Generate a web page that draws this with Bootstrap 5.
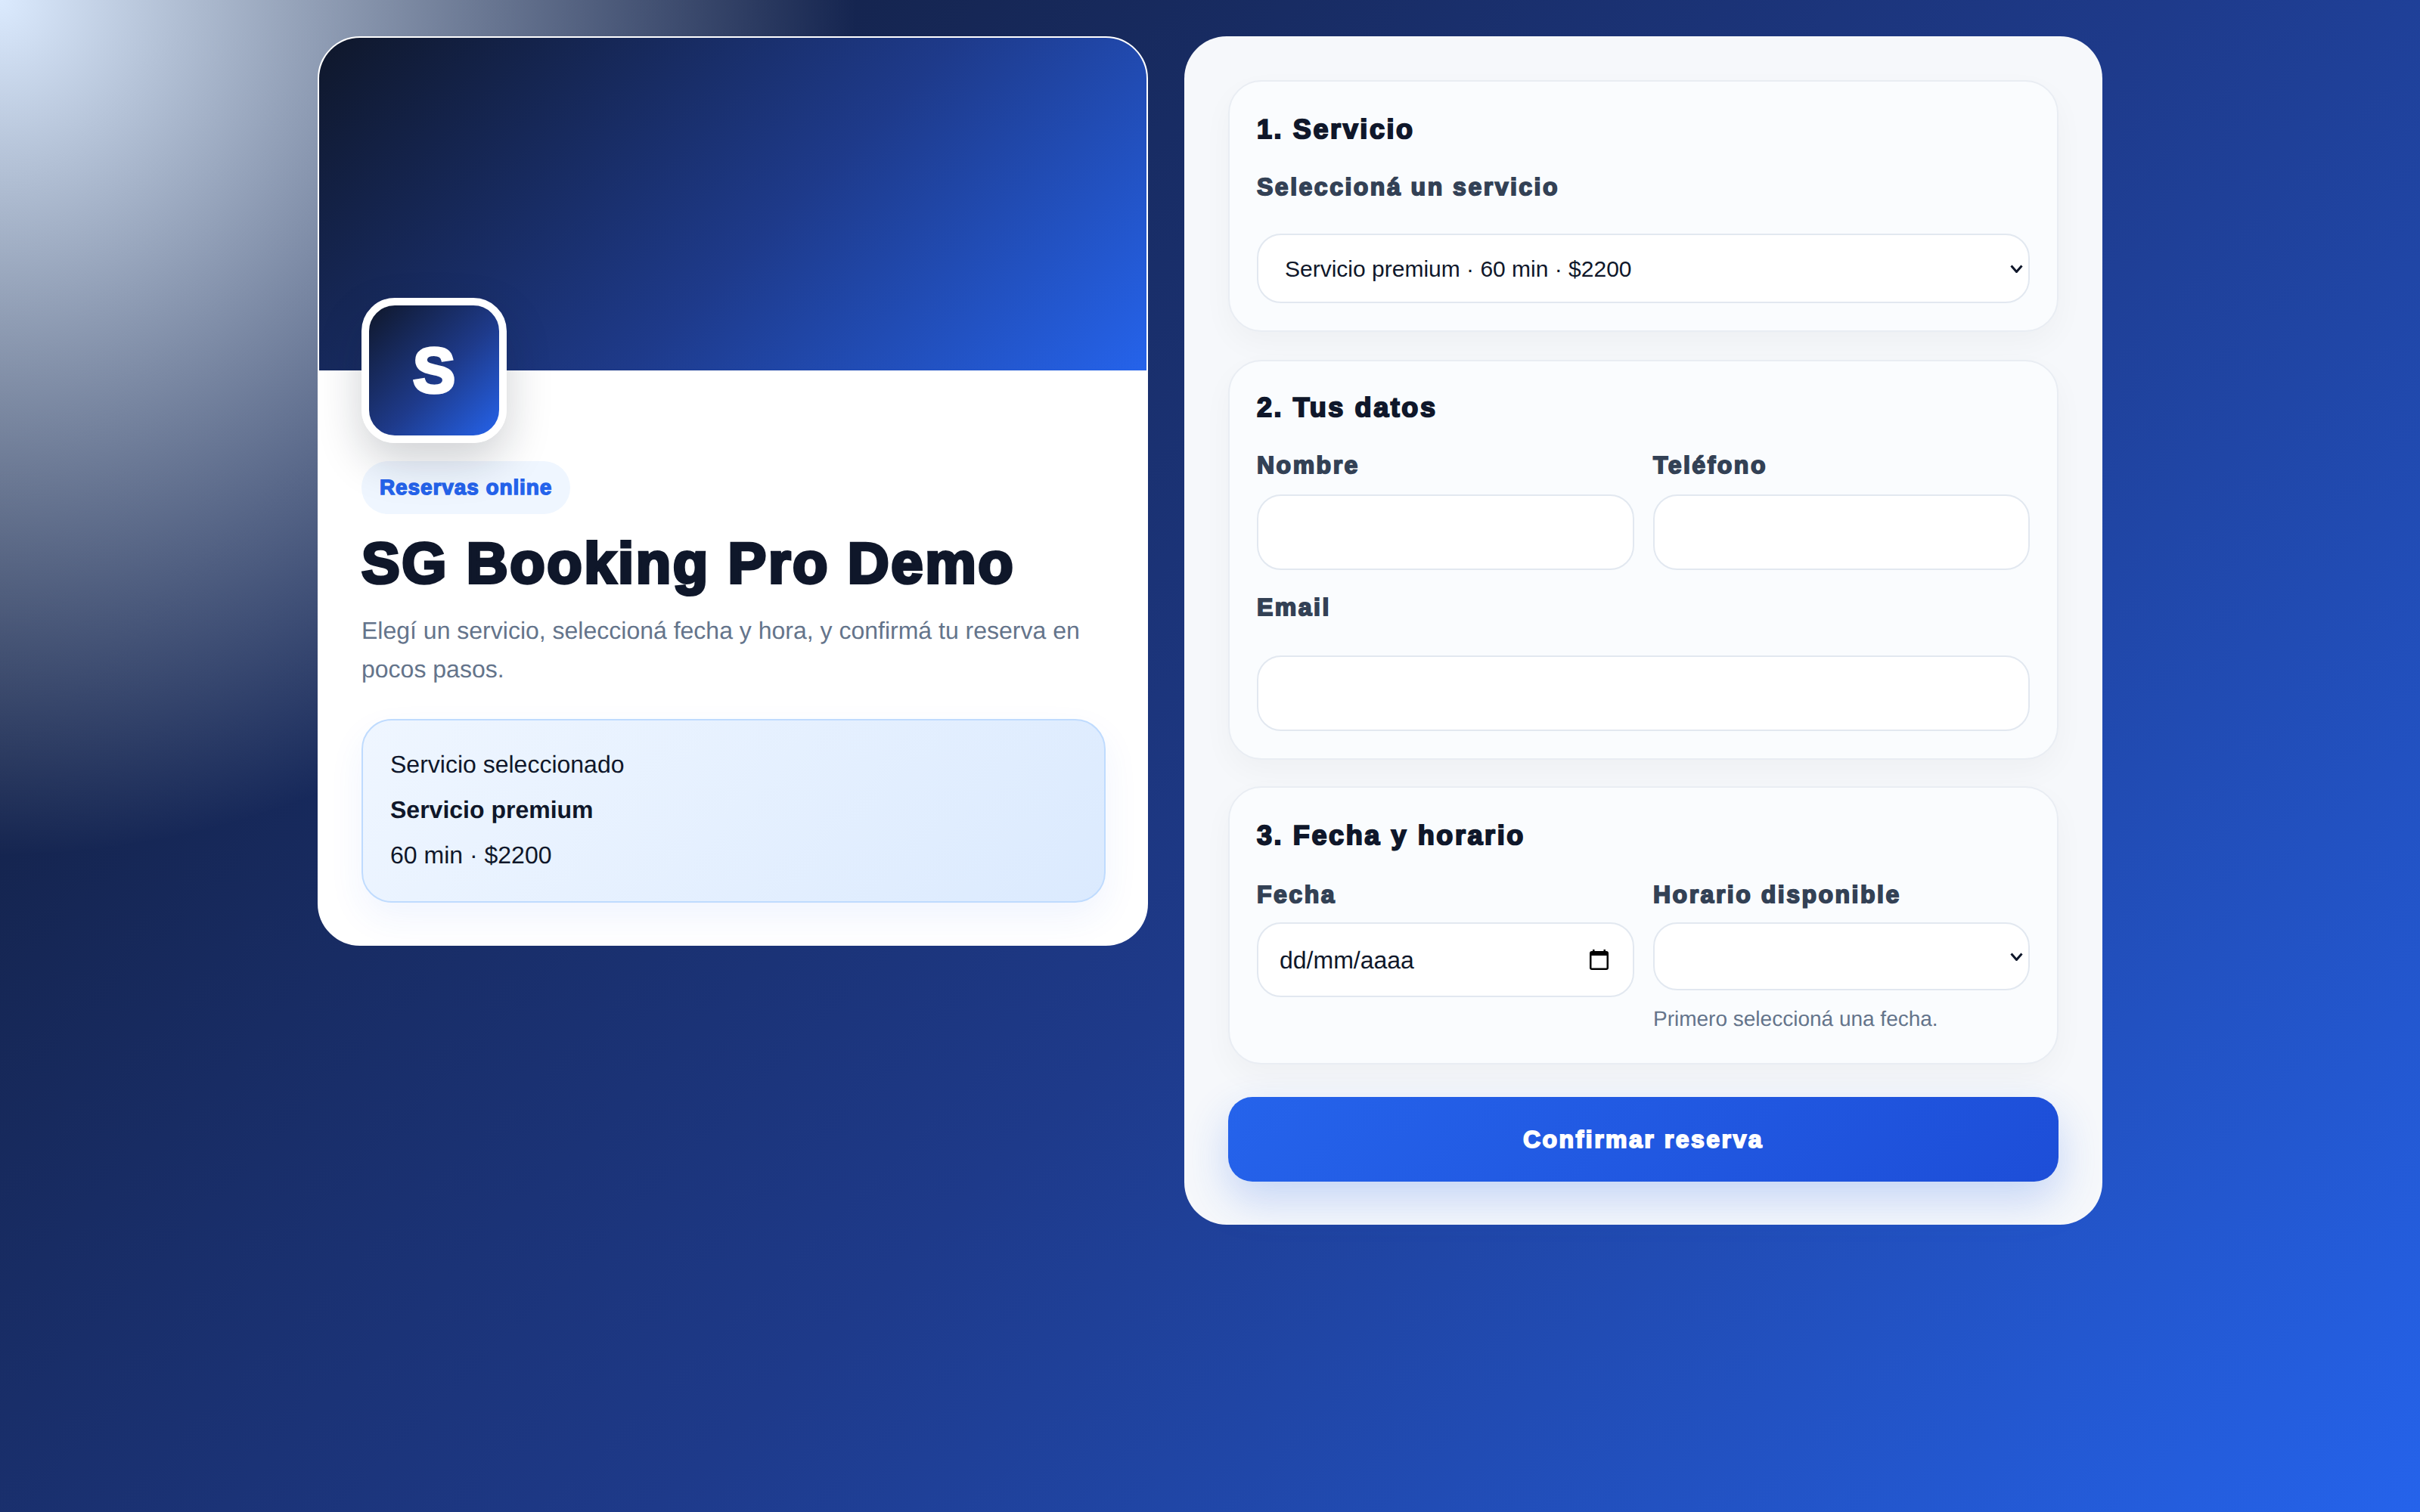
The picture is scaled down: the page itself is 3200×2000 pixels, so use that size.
<!DOCTYPE html>
<html lang="es">
<head>
<meta charset="utf-8">
<title>SG Booking Pro Demo</title>
<link rel="stylesheet" href="https://cdn.jsdelivr.net/npm/bootstrap@5.3.0/dist/css/bootstrap.min.css">
<style>
html, body { min-height: 100%; }
body {
  font-family: "Liberation Sans", Arial, sans-serif;
  font-size: 32px;
  color: #0f172a;
  min-height: 2000px;
  text-rendering: geometricPrecision;
  background: radial-gradient(circle at top left, #dbeafe 0, transparent 30%), linear-gradient(135deg, #0f172a 0%, #1e3a8a 55%, #2563eb 100%);
}
.page-wrap { width: 2360px; margin: 0 auto; padding-top: 48px; }
.layout-grid { display: grid; grid-template-columns: 1098px 1214px; gap: 48px; align-items: start; }
.brand-card { background: #fff; border: 2px solid #fff; border-radius: 56px; overflow: hidden; }
.brand-cover { height: 440px; background: linear-gradient(135deg, #0f172a 0%, #1e3a8a 55%, #2563eb 100%); }
.brand-body { padding: 0 54px 55px 56px; }
.brand-logo {
  width: 192px; height: 192px; margin-top: -96px; position: relative;
  border: 10px solid #fff; border-radius: 44px;
  background: linear-gradient(135deg, #0f172a 0%, #1e3a8a 55%, #2563eb 100%);
  color: #fff; font-size: 84px; font-weight: 900; -webkit-text-stroke: 4px #fff;
  box-shadow: 0 24px 60px rgba(15,23,42,.2);
}
.tag-pill { margin-top: 24px; height: 70px; padding: 0 24px; background: #eff6ff; color: #2563eb; border-radius: 999px; font-size: 28px; font-weight: 800; letter-spacing: .9px; -webkit-text-stroke: 1.4px #2563eb; }
.brand-title { margin: 24px 0 0; font-size: 76px; line-height: 84px; font-weight: 900; letter-spacing: 2.6px; -webkit-text-stroke: 4px #0f172a; color: #0f172a; }
.brand-sub { margin: 21px 0 0; color: #64748b; font-size: 32px; line-height: 51.2px; }
.summary-box { margin-top: 40px; height: 243px; padding: 34px 36px; border: 2px solid #bfdbfe; border-radius: 40px; background: linear-gradient(135deg, #eff6ff, #dbeafe); box-shadow: 0 20px 48px rgba(37,99,235,.07); }
.summary-box p { margin: 0 0 12px; line-height: 48px; }
.summary-box p:last-child { margin-bottom: 0; }
.form-shell { background: #f6f8fb; border-radius: 56px; padding: 58px 58px 57px; }
.step-box { background: #fafcfe; border: 2px solid #e9edf3; border-radius: 44px; padding: 35px 36px 36px; margin-bottom: 37px; box-shadow: 0 16px 40px rgba(15,23,42,.035); }
.step-data { padding-top: 33px; margin-bottom: 35px; }
.step-slot { padding-bottom: 38px; margin-bottom: 43px; }
.step-title { margin: 0 0 24px; font-size: 36px; line-height: 56px; font-weight: 800; letter-spacing: 2.6px; -webkit-text-stroke: 2px #0f172a; color: #0f172a; }
.field-label { display: block; margin: 0; font-size: 32px; line-height: 48px; font-weight: 700; letter-spacing: 2.5px; -webkit-text-stroke: 1.8px #334155; color: #334155; }
.field-pair { display: grid; grid-template-columns: 499px 498px; gap: 25px; align-items: start; }
.field-pair-low { margin-top: 26px; }
.field-input, .field-select {
  display: block; width: 100%; background-color: #fff; border: 2px solid #e2e8f0; border-radius: 32px; color: #0f172a; font-size: 30px; padding: 0 35px;
}
.field-input { height: 100px; }
.field-select { height: 92px; appearance: none;
  background-image: url("data:image/svg+xml,%3Csvg xmlns='http://www.w3.org/2000/svg' viewBox='0 0 17 11'%3E%3Cpath d='M1.5 1.5 8.5 9.5l7-8' fill='none' stroke='%230f172a' stroke-width='3'/%3E%3C/svg%3E");
  background-repeat: no-repeat; background-size: 17px 11px; background-position: right 7px center; }
.mt-label-wide { margin-top: 38px; }
.mt-label-tight { margin-top: 15px; }
.mt-label-slot { margin-top: 13px; }
.mt-email { margin-top: 25px; }
.mt-email-input { margin-top: 40px; }
.date-fake { height: 99px; padding: 0 32px 0 28px; font-size: 32px; }
.slot-select { height: 90px; }
.hint-text { margin-top: 18px; color: #64748b; font-size: 28px; line-height: 40px; }
.confirm-btn { display: block; width: 100%; height: 112px; border: 0; border-radius: 32px; color: #fff; font-size: 32px; font-weight: 800; letter-spacing: 2.5px; -webkit-text-stroke: 1.8px #fff; background: linear-gradient(135deg, #2563eb, #1d4ed8); box-shadow: 0 24px 56px rgba(37,99,235,.24); }
.cal-glyph { width: 25px; height: 27px; }
</style>
</head>
<body>
<main class="page-wrap">
  <div class="layout-grid">
    <section class="brand-card">
      <div class="brand-cover"></div>
      <div class="brand-body">
        <div class="brand-logo d-flex align-items-center justify-content-center">S</div>
        <div class="tag-pill d-inline-flex align-items-center">Reservas online</div>
        <h1 class="brand-title">SG Booking Pro Demo</h1>
        <p class="brand-sub">Elegí un servicio, seleccioná fecha y hora, y confirmá tu reserva en pocos pasos.</p>
        <div class="summary-box">
          <p>Servicio seleccionado</p>
          <p class="fw-bold">Servicio premium</p>
          <p>60 min · $2200</p>
        </div>
      </div>
    </section>
    <form class="form-shell">
      <div class="step-box">
        <h2 class="step-title">1. Servicio</h2>
        <label class="field-label">Seleccioná un servicio</label>
        <select class="field-select mt-label-wide"><option>Servicio premium · 60 min · $2200</option></select>
      </div>
      <div class="step-box step-data">
        <h2 class="step-title">2. Tus datos</h2>
        <div class="field-pair">
          <div>
            <label class="field-label">Nombre</label>
            <input class="field-input mt-label-tight" type="text">
          </div>
          <div>
            <label class="field-label">Teléfono</label>
            <input class="field-input mt-label-tight" type="text">
          </div>
        </div>
        <label class="field-label mt-email">Email</label>
        <input class="field-input mt-email-input" type="email">
      </div>
      <div class="step-box step-slot">
        <h2 class="step-title">3. Fecha y horario</h2>
        <div class="field-pair field-pair-low">
          <div>
            <label class="field-label">Fecha</label>
            <div class="field-input date-fake mt-label-slot d-flex align-items-center justify-content-between">
              <span>dd/mm/aaaa</span>
              <svg class="cal-glyph" viewBox="0 0 25 27" aria-hidden="true"><path fill="#000" d="M4 0h2.5v2h12V0H21v2h1a3 3 0 0 1 3 3v19a3 3 0 0 1-3 3H3a3 3 0 0 1-3-3V5a3 3 0 0 1 3-3h1z"/><rect x="2.5" y="8" width="20" height="16.5" fill="#fff"/></svg>
            </div>
          </div>
          <div>
            <label class="field-label">Horario disponible</label>
            <select class="field-select slot-select mt-label-slot"><option></option></select>
            <div class="hint-text">Primero seleccioná una fecha.</div>
          </div>
        </div>
      </div>
      <button type="button" class="confirm-btn">Confirmar reserva</button>
    </form>
  </div>
</main>
<script src="https://cdn.jsdelivr.net/npm/bootstrap@5.3.0/dist/js/bootstrap.bundle.min.js"></script>
</body>
</html>
